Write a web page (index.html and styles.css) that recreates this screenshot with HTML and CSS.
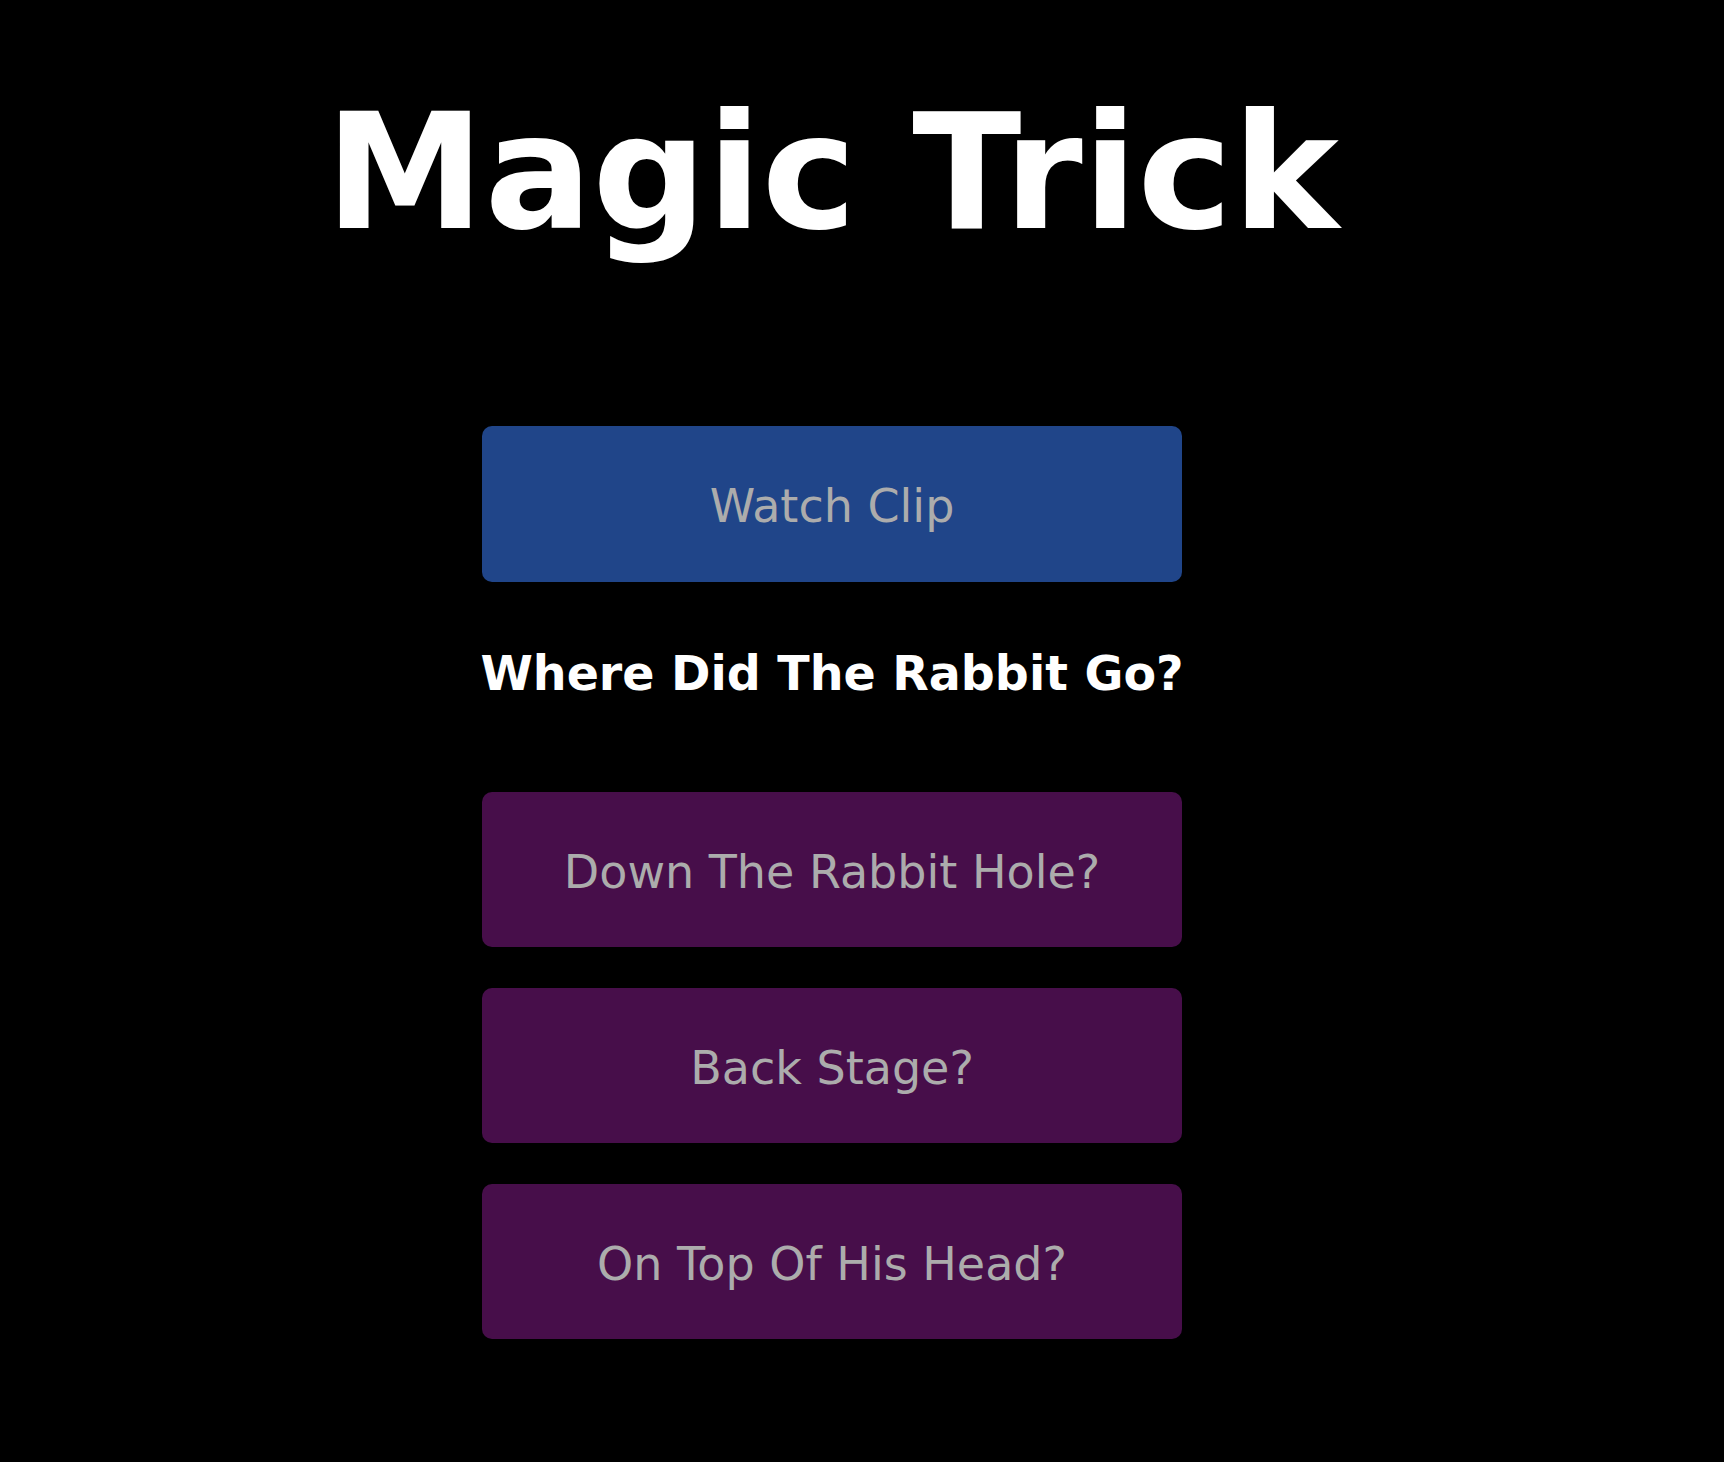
FILE: index.html
```html
<!DOCTYPE html>
<html lang="en">
<head>
<meta charset="utf-8">
<title>Magic Trick</title>
<link rel="stylesheet" href="styles.css">
</head>
<body>
<main class="page">
  <h1 class="title">Magic Trick</h1>
  <section class="quiz">
    <button class="btn btn-clip">Watch Clip</button>
    <h2 class="question">Where Did The Rabbit Go?</h2>
    <div class="options">
      <button class="btn btn-option">Down The Rabbit Hole?</button>
      <button class="btn btn-option">Back Stage?</button>
      <button class="btn btn-option">On Top Of His Head?</button>
    </div>
  </section>
</main>
</body>
</html>
```

FILE: styles.css
```css
html, body {
  margin: 0;
  padding: 0;
  background: #000;
}

body {
  font-family: "DejaVu Sans", "Liberation Sans", sans-serif;
  color: #fff;
  min-height: 1462px;
}

.page {
  width: 1664px;
  display: flex;
  flex-direction: column;
  align-items: center;
}

.title {
  margin: 93px 0 0;
  font-size: 160px;
  line-height: 1;
  font-weight: bold;
  height: 160px;
}

.quiz {
  margin-top: 173px;
  width: 700px;
  display: flex;
  flex-direction: column;
  align-items: center;
}

.btn {
  display: flex;
  align-items: center;
  justify-content: center;
  width: 700px;
  height: 155.5px;
  border: none;
  border-radius: 10px;
  font-family: "DejaVu Sans", "Liberation Sans", sans-serif;
  font-size: 46px;
  color: #acacac;
  padding: 4px 0 0;
  margin: 0;
}

.btn-clip {
  background: #204589;
}

.btn-option {
  background: #470e4a;
}

.question {
  margin: 64.4px 0 0;
  font-size: 47.5px;
  font-weight: bold;
  line-height: normal;
  white-space: nowrap;
}

.options {
  margin-top: 91px;
  display: flex;
  flex-direction: column;
  gap: 40.5px;
}
```
